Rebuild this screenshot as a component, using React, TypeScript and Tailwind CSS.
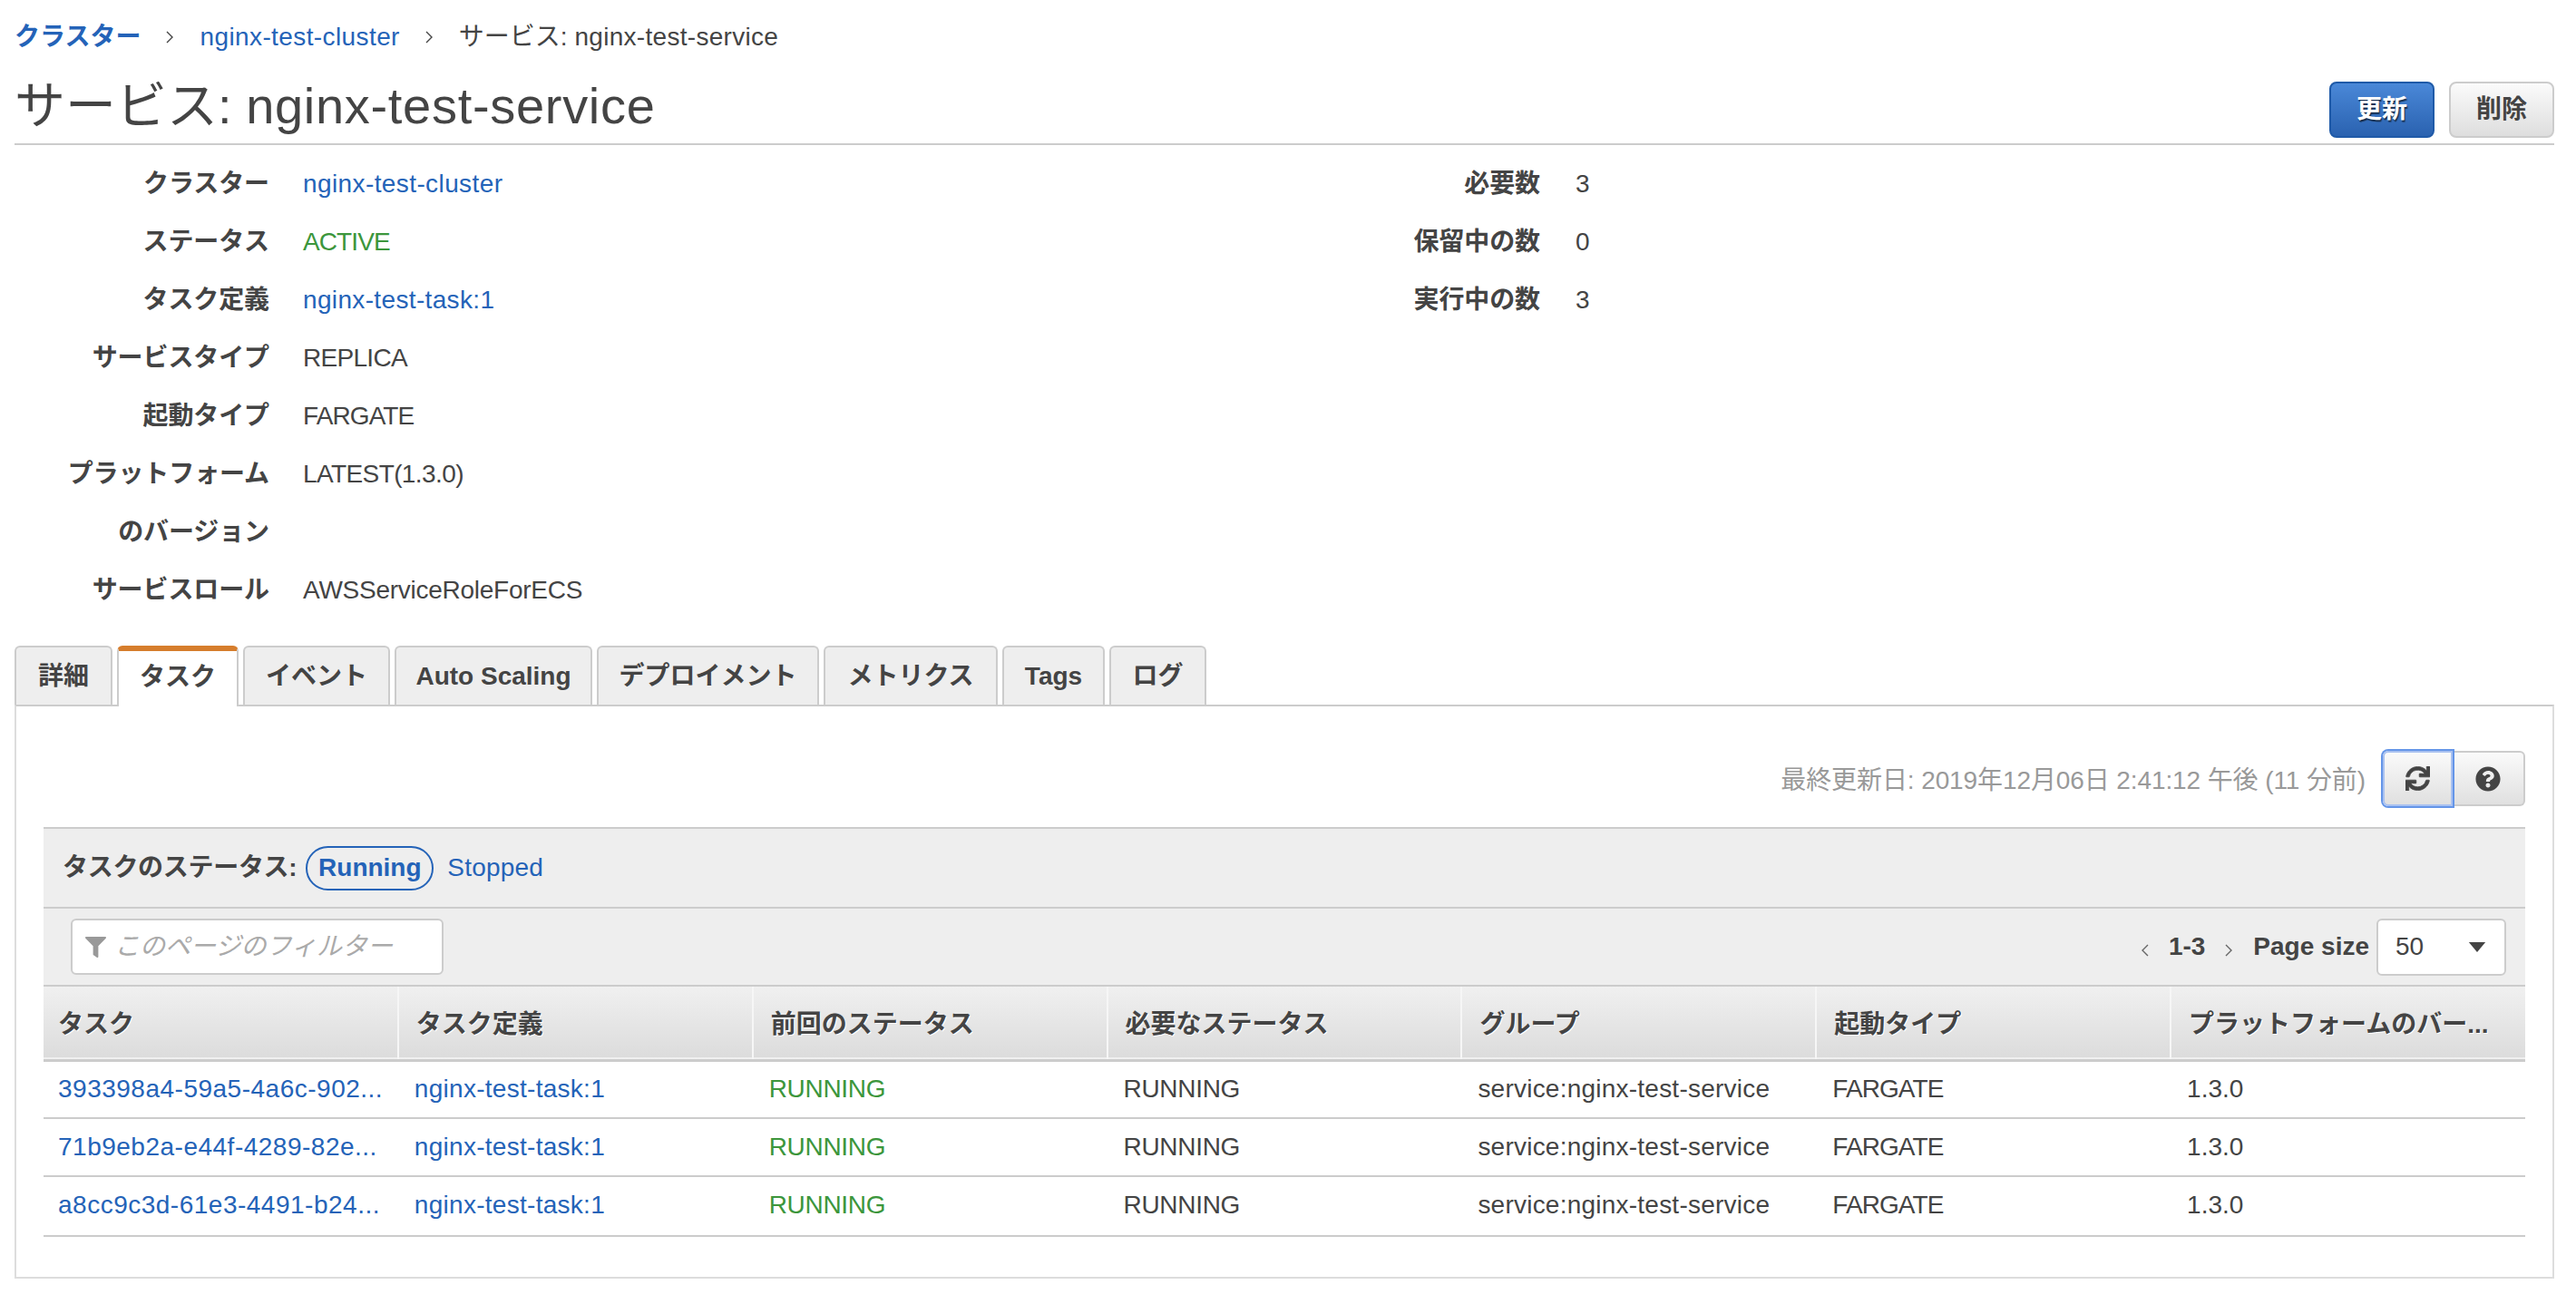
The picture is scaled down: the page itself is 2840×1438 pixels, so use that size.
import { FaFilter, FaQuestionCircle, FaSync } from "react-icons/fa"

const font = "[font-family:'Liberation_Sans','Noto_Sans_CJK_JP',sans-serif]"

const leftRows = [
  { label: "クラスター", value: "nginx-test-cluster", tone: "text-[#2463b8] tracking-[0.4px]" },
  { label: "ステータス", value: "ACTIVE", tone: "text-[#3c963c] tracking-[-0.9px]" },
  { label: "タスク定義", value: "nginx-test-task:1", tone: "text-[#2463b8] tracking-[0.35px]" },
  { label: "サービスタイプ", value: "REPLICA", tone: "tracking-[-0.7px]" },
  { label: "起動タイプ", value: "FARGATE", tone: "tracking-[-0.9px]" },
]

const rightRows = [
  { label: "必要数", value: "3" },
  { label: "保留中の数", value: "0" },
  { label: "実行中の数", value: "3" },
]

const tabs = [
  { label: "詳細", width: "w-[108px]" },
  { label: "タスク", width: "w-[134px]", active: true },
  { label: "イベント", width: "w-[162px]" },
  { label: "Auto Scaling", width: "w-[218px]" },
  { label: "デプロイメント", width: "w-[245px]" },
  { label: "メトリクス", width: "w-[192px]" },
  { label: "Tags", width: "w-[113px]" },
  { label: "ログ", width: "w-[107px]" },
]

const columns = [
  "タスク",
  "タスク定義",
  "前回のステータス",
  "必要なステータス",
  "グループ",
  "起動タイプ",
  "プラットフォームのバー...",
]

const tasks = [
  { id: "393398a4-59a5-4a6c-902...", height: "h-[64px]" },
  { id: "71b9eb2a-e44f-4289-82e...", height: "h-[64px]" },
  { id: "a8cc9c3d-61e3-4491-b24...", height: "h-[66px] [&>td]:pb-[2px]" },
]

function Chevron({ className }: { className?: string }) {
  return (
    <svg viewBox="0 0 10 18" className={className} fill="none" stroke="currentColor" strokeWidth="1.4">
      <path d="M2 3l6 6-6 6" />
    </svg>
  )
}

export default function App() {
  return (
    <div className={`${font} min-h-[1438px] bg-white pl-4 pr-6 text-[28px] text-[#444]`}>
      <nav className="flex h-[82px] items-center">
        <a className="font-bold text-[#2463b8]">クラスター</a>
        <Chevron className="mr-[28px] ml-[27px] h-[18px] w-[10px] text-[#444]" />
        <a className="tracking-[0.4px] text-[#2463b8]">nginx-test-cluster</a>
        <Chevron className="mr-[28px] ml-[27px] h-[18px] w-[10px] text-[#444]" />
        <span>
          サービス: <span className="tracking-[0.3px]">nginx-test-service</span>
        </span>
      </nav>

      <header className="flex h-[78px] items-start justify-between border-b-2 border-[#ccc]">
        <h1 className="mt-[-1px] text-[56px] leading-[72px] font-normal">
          サービス: <span className="tracking-[0.7px]">nginx-test-service</span>
        </h1>
        <div className="mt-2 flex gap-4">
          <button className="h-[62px] w-[116px] rounded-lg border-2 border-[#1f5aa8] bg-gradient-to-b from-[#4a88d8] to-[#2a62b0] font-bold text-white [text-shadow:1px_2px_1px_rgba(0,0,0,0.6)]">
            更新
          </button>
          <button className="h-[62px] w-[116px] rounded-lg border-2 border-[#ccc] bg-gradient-to-b from-[#fbfbfb] to-[#dedede] font-bold text-[#444]">
            削除
          </button>
        </div>
      </header>

      <section className="mt-[11px] flex leading-[64px]">
        <div className="w-[1405px]">
          {leftRows.map((row) => (
            <div key={row.label} className="flex h-16">
              <div className="w-[281px] text-right font-bold tracking-[-0.1px]">{row.label}</div>
              <div className={`ml-[37px] ${row.tone}`}>{row.value}</div>
            </div>
          ))}
          <div className="flex h-32">
            <div className="w-[281px] text-right font-bold tracking-[-0.1px]">
              プラットフォーム
              <br />
              のバージョン
            </div>
            <div className="ml-[37px] tracking-[-0.6px]">LATEST(1.3.0)</div>
          </div>
          <div className="flex h-16">
            <div className="w-[281px] text-right font-bold tracking-[-0.1px]">サービスロール</div>
            <div className="ml-[37px] tracking-[-0.26px]">AWSServiceRoleForECS</div>
          </div>
        </div>
        <div>
          {rightRows.map((row) => (
            <div key={row.label} className="flex h-16">
              <div className="w-[277px] text-right font-bold tracking-[-0.1px]">{row.label}</div>
              <div className="ml-[39px]">{row.value}</div>
            </div>
          ))}
        </div>
      </section>

      <div className="mt-[29px] flex items-start gap-[5px]">
        {tabs.map((tab) =>
          tab.active ? (
            <div
              key={tab.label}
              className={`${tab.width} relative z-10 -mb-[2px] flex h-[67px] items-center justify-center rounded-t-md border-x-2 border-t-[6px] border-x-[#ccc] border-t-[#d67d2c] bg-white pb-1 font-bold`}
            >
              {tab.label}
            </div>
          ) : (
            <div
              key={tab.label}
              className={`${tab.width} flex h-[65px] items-center justify-center rounded-t-md border-x-2 border-t-2 border-[#ccc] bg-[#eee] font-bold`}
            >
              {tab.label}
            </div>
          ),
        )}
      </div>

      <main className="border-x-2 border-t-2 border-b-2 border-x-[#ddd] border-t-[#ccc] border-b-[#ddd] px-[30px] pt-[49px] pb-[44px]">
        <div className="flex items-center justify-end">
          <span className="mt-1 mr-[19px] tracking-[-0.1px] text-[#999]">最終更新日: 2019年12月06日 2:41:12 午後 (11 分前)</span>
          <button className="relative z-10 flex h-[61px] w-[77px] items-center justify-center rounded-l-md border-2 border-[#a9c1f0] bg-gradient-to-b from-[#fafafa] to-[#e0e0e0] shadow-[0_0_0_2px_#6495e8]">
            <FaSync className="size-[27px] text-[#444]" stroke="currentColor" strokeWidth={14} />
          </button>
          <button className="flex h-[61px] w-[80px] items-center justify-center rounded-r-md border-y-2 border-r-2 border-[#ccc] bg-gradient-to-b from-[#fafafa] to-[#e0e0e0]">
            <FaQuestionCircle className="size-[28px] text-[#444]" />
          </button>
        </div>

        <div className="mt-[23px] border-t-2 border-[#ccc] bg-[#eee]">
          <div className="flex h-[88px] items-center border-b-2 border-[#ccc] pl-[21px]">
            <span className="font-bold tracking-[-0.3px]">タスクのステータス:</span>
            <span className="ml-[10px] flex h-[49px] w-[141px] items-center justify-center rounded-full border-2 border-[#2463b8] font-bold text-[#2463b8]">
              Running
            </span>
            <a className="ml-[15px] tracking-[0.2px] text-[#2463b8]">Stopped</a>
          </div>

          <div className="flex h-[86px] items-center justify-between border-b-2 border-[#ccc] pr-[21px] pl-[30px]">
            <div className="flex h-[62px] w-[411px] items-center rounded-md border-2 border-[#ccc] bg-white pl-[14px]">
              <FaFilter className="size-[23px] text-[#999]" />
              <span className="ml-[9px] text-[#aaa] italic">このページのフィルター</span>
            </div>
            <div className="flex items-center">
              <Chevron className="mr-[21px] h-[18px] w-[10px] translate-y-[4px] rotate-180 text-[#666]" />
              <span className="font-bold">1-3</span>
              <Chevron className="ml-[21px] h-[18px] w-[10px] translate-y-[4px] text-[#666]" />
              <span className="ml-[22px] font-bold">Page size</span>
              <div className="ml-[8px] flex h-[63px] w-[143px] items-center justify-between rounded-md border-2 border-[#ccc] bg-white pr-[20px] pl-[19px]">
                <span>50</span>
                <svg viewBox="0 0 20 12" className="h-[11px] w-[20px] fill-[#444]">
                  <path d="M0 0h20L10 12z" />
                </svg>
              </div>
            </div>
          </div>
        </div>

        <table className="w-full table-fixed border-collapse">
          <thead>
            <tr className="h-[81px] border-b-[3px] border-[#ccc] bg-gradient-to-b from-[#f0f0f0] to-[#dcdcdc]">
              {columns.map((col, i) => (
                <th
                  key={col}
                  className={`truncate pt-1 text-left font-bold [text-shadow:1px_1px_0_#fff] ${i === 0 ? "pl-4" : "pl-[19px]"} ${i < 6 ? "border-r-2 border-[#f6f6f6]" : ""}`}
                >
                  {col}
                </th>
              ))}
            </tr>
          </thead>
          <tbody>
            {tasks.map((task) => (
              <tr key={task.id} className={`${task.height} border-b-2 border-[#ccc]`}>
                <td className="truncate pl-4 tracking-[0.5px] text-[#2463b8]">{task.id}</td>
                <td className="truncate pl-[18px] tracking-[0.28px] text-[#2463b8]">nginx-test-task:1</td>
                <td className="truncate pl-[18px] tracking-[-0.3px] text-[#3c963c]">RUNNING</td>
                <td className="truncate pl-[18px] tracking-[-0.3px]">RUNNING</td>
                <td className="truncate pl-[18px] tracking-[0.23px]">service:nginx-test-service</td>
                <td className="truncate pl-[18px] tracking-[-0.9px]">FARGATE</td>
                <td className="truncate pl-[18px]">1.3.0</td>
              </tr>
            ))}
          </tbody>
        </table>
      </main>
    </div>
  )
}
